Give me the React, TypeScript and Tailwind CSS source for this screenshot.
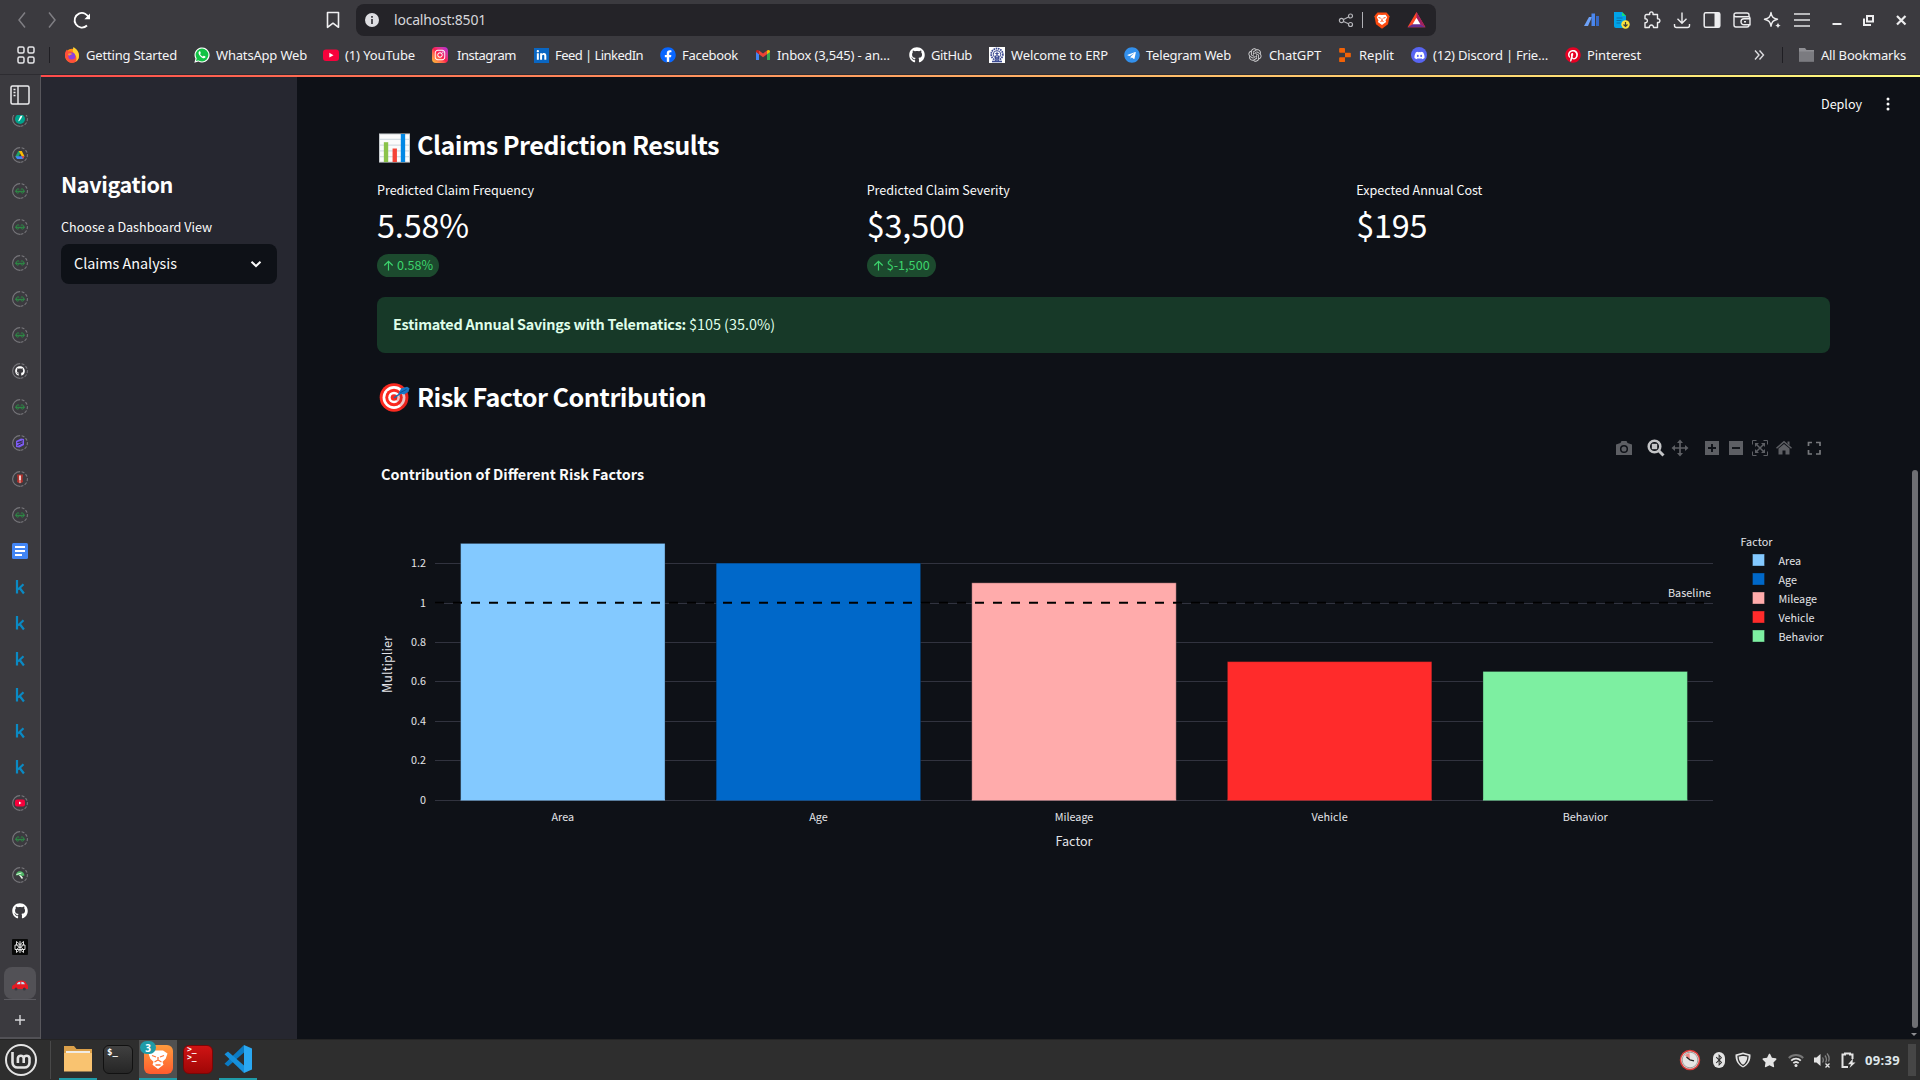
import { useLayoutEffect, useRef, useState, type ReactNode } from "react";
import { SiReplit } from "react-icons/si";
import {
  FaGithub,
  FaFacebook,
  FaTelegram,
  FaDiscord,
  FaPinterest,
  FaLinkedinIn,
  FaInstagram,
  FaStar,
  FaBluetoothB,
} from "react-icons/fa";
import { RiOpenaiFill } from "react-icons/ri";

const SANS = "font-['Noto_Sans_CJK_SC',sans-serif]";

/* Text set to an exact advance width by spreading the difference over its letters. */
function Fit({ w, className = "", children }: { w: number; className?: string; children: string }) {
  const ref = useRef<HTMLSpanElement>(null);
  const [spacing, setSpacing] = useState(0);
  useLayoutEffect(() => {
    const el = ref.current;
    if (el) setSpacing((w - el.getBoundingClientRect().width) / children.length);
  }, [w, children]);
  return (
    <span ref={ref} className={"inline-block whitespace-nowrap " + className} style={{ letterSpacing: spacing }}>
      {children}
    </span>
  );
}

function Svg({ s = 20, box = 20, className = "", children }: { s?: number; box?: number; className?: string; children: ReactNode }) {
  return (
    <svg width={s} height={s} viewBox={`0 0 ${box} ${box}`} fill="none" className={"shrink-0 " + className}>
      {children}
    </svg>
  );
}

/* ---------- Browser icons ---------- */

const FirefoxIcon = () => (
  <Svg s={16} box={16}>
    <circle cx="8" cy="8.700" r="7" fill="#ff8a16" />
    <path d="M1 8C.8 5.500 2 3.500 3 2.500c.3 1 .8 1.500 1.500 2C6 4 7 4.200 8 5L15 9c0 4-3.200 6.800-7 6.800S1 12.500 1 8z" fill="#ff4f3a" />
    <path d="M9.500 0c2.500 1.500 5.500 4.500 5.500 8.700 0 3-1.700 5-3.500 6 1.500-2.200 1.200-5-.3-6.700C9.500 6 8 4 9.500 0z" fill="#ffcf2e" />
    <circle cx="7.800" cy="9" r="3.500" fill="#8a3fe0" />
    <path d="M4 6.800c1.500-1 3.500-.5 4.500.5-1.500 0-2 .7-2.800 1.200C4.800 8.800 4 8 4 6.800z" fill="#ffa02e" />
  </Svg>
);
const WhatsAppIcon = () => (
  <Svg s={16} box={24}>
    <path d="M.5 23.500L2.200 17.500A11.300 11.300 0 1 1 6.600 21.900z" fill="#fff" />
    <circle cx="12" cy="12" r="9.600" fill="#12c245" />
    <path d="M3 21l1.200-4.500 3.300 3.300z" fill="#12c245" />
    <path d="M8 6.500c-2.600 2-.4 5.600 1.800 7.700 2.300 2.200 5.200 4 7.100 1.600.7-1 .3-1.600-.4-2l-1.700-.8c-.9-.4-1.200 1.500-2 1.200-1.500-.6-2.900-2-3.500-3.300-.3-.8 1.100-1.200.9-2l-.8-2c-.3-.6-.8-.8-1.400-.4z" fill="#fff" />
  </Svg>
);
const YouTubeIcon = () => (
  <Svg s={16} box={16}>
    <rect x="0" y="2.500" width="16" height="11.500" rx="3" fill="#f7023c" />
    <path d="M6.300 5.800v4.800l4.200-2.400z" fill="#fff" />
  </Svg>
);
const InstagramIcon = () => (
  <span className="flex size-4 shrink-0 items-center justify-center rounded bg-linear-to-tr from-[#ffc12e] via-[#fb1b4f] to-[#b51fe0]">
    <FaInstagram className="size-3 text-white" />
  </span>
);
const LinkedInIcon = () => (
  <span className="flex size-[15px] shrink-0 items-center justify-center bg-[#0a66c2]">
    <FaLinkedinIn className="size-[11px] text-white" />
  </span>
);
const OnWhite = ({ children }: { children: ReactNode }) => (
  <span className="flex size-4 shrink-0 items-center justify-center">
    <span className="flex size-[14px] items-center justify-center rounded-full bg-white">{children}</span>
  </span>
);
const GmailIcon = () => (
  <Svg s={16} box={16}>
    <path d="M1 13V4.500l3 2.300V13z" fill="#4285f4" />
    <path d="M12 13V6.800l3-2.300V13z" fill="#34a853" />
    <path d="M4 3.500l4 3 4-3v3.700l-4 3-4-3z" fill="#ea4335" />
    <path d="M1 4.500C1 2.800 2.700 2.500 4 3.500v3.700L1 5z" fill="#c5221f" />
    <path d="M15 4.500c0-1.700-1.700-2-3-1v3.700L15 5z" fill="#fbbc04" />
  </Svg>
);
const ErpIcon = () => (
  <Svg s={16} box={16}>
    <path d="M0 0h16v16H0z" fill="#fff" />
    <circle cx="8" cy="7.300" r="5.800" stroke="#3b4a92" strokeWidth="1.800" strokeDasharray="1.600 .7" />
    <circle cx="8" cy="7.300" r="3.700" stroke="#3b4a92" strokeWidth="1" />
    <path d="M8 4.500v8M6.300 6.500h3.400M6.500 9l1.500-1.500L9.500 9v3h-3z" stroke="#3b4a92" />
    <path d="M3 14.500h10" stroke="#3b4a92" strokeWidth="1.600" />
  </Svg>
);

/* label, cell width, label width, icon */
const BOOKMARKS: [string, number, number, ReactNode][] = [
  ["Getting Started", 130, 91, <FirefoxIcon />],
  ["WhatsApp Web", 129, 91, <WhatsAppIcon />],
  ["(1) YouTube", 109, 70, <YouTubeIcon />],
  ["Instagram", 101, 59, <InstagramIcon />],
  ["Feed | LinkedIn", 127, 88, <LinkedInIcon />],
  ["Facebook", 95, 56, <OnWhite><FaFacebook className="size-4 shrink-0 text-[#0866ff]" /></OnWhite>],
  ["Inbox (3,545) - an…", 154, 113, <GmailIcon />],
  ["GitHub", 80, 41, <FaGithub className="size-4 shrink-0 text-white" />],
  ["Welcome to ERP", 135, 97, <ErpIcon />],
  ["Telegram Web", 123, 85, <OnWhite><FaTelegram className="size-4 shrink-0 text-[#3390ec]" /></OnWhite>],
  ["ChatGPT", 90, 52, <RiOpenaiFill className="size-4 shrink-0 text-[#d4d4d6]" />],
  ["Replit", 74, 35, <SiReplit className="size-[14px] shrink-0 text-[#f26207]" />],
  [
    "(12) Discord | Frie…",
    154,
    115,
    <span className="flex size-4 shrink-0 items-center justify-center rounded-full bg-[#5865f2]">
      <FaDiscord className="size-[11px] text-white" />
    </span>,
  ],
  ["Pinterest", 90, 54, <OnWhite><FaPinterest className="size-4 shrink-0 text-[#e60023]" /></OnWhite>],
];

const EXTENSION_ICONS: ReactNode[] = [
  <Svg>
    <path d="M2 16L7 7h3L6 16z" fill="#6ea2f8" />
    <path d="M9.500 3.500H13V16H9.500z" fill="#4a86ee" />
    <path d="M14 6h3v10h-3z" fill="#3568c6" />
  </Svg>,
  <Svg>
    <path d="M2 2h8l4 4v12H4a2 2 0 0 1-2-2z" fill="#00a3e8" />
    <path d="M10 2l4 4h-4z" fill="#16e07a" />
    <path d="M4.500 8h6M4.500 10.500h5M4.500 13h4" stroke="#0870a8" />
    <circle cx="13.500" cy="14.500" r="4.200" fill="#fbe13c" />
    <path d="M13.500 12v4.500m-2-2l2 2 2-2" stroke="#3f4038" strokeWidth="1.200" />
  </Svg>,
  <Svg className="text-[#ededef]">
    <path d="M4.500 4.500h3.200C7 1 11.800 1 11 4.500h4.500v4.300c3.200-.7 3.200 4.400 0 3.700v5H11.500c.3-3.300-4.500-3.300-4.200 0H3v-4.700c3.200.3 3.200-4.300 0-4V6a1.500 1.500 0 0 1 1.500-1.500z" stroke="currentColor" strokeWidth="1.400" strokeLinejoin="round" />
  </Svg>,
  <Svg>
    <path d="M10 2.500V13M5.500 8.800l4.500 4.400 4.500-4.400M2.500 14v1.500c0 1.500.7 2 2 2h11c1.300 0 2-.5 2-2V14" stroke="#ededef" strokeWidth="1.400" />
  </Svg>,
  <Svg>
    <rect x="2.200" y="2.700" width="15.600" height="14.600" rx="1.500" stroke="#ededef" strokeWidth="1.500" />
    <path d="M12.500 3h5v14h-5z" fill="#ededef" />
  </Svg>,
  <Svg>
    <path d="M17 6.500V5c0-1.300-.7-2-2-2H4C2.700 3 2 3.700 2 5v10c0 1.300.7 2 2 2h11c1.300 0 2-.7 2-2M2 5c0 1 .7 1.700 2 1.700h12.500c1 0 1.500.5 1.500 1.500v6.600h-6a3 3 0 0 1 0-6h6M12 11.800h2" stroke="#ededef" strokeWidth="1.400" />
  </Svg>,
  <Svg>
    <path d="M9 2.500c.8 4.500 2 5.700 6.500 6.800-4.500 1.100-5.700 2.400-6.500 6.900-.8-4.500-2-5.800-6.500-6.900C7 8.200 8.200 7 9 2.500z" stroke="#ededef" strokeWidth="1.400" strokeLinejoin="round" />
    <path d="M16 12.500c.4 2 .9 2.600 2.800 3-1.900.5-2.400 1.100-2.800 3-.4-1.900-1-2.500-2.800-3 1.800-.4 2.400-1 2.800-3z" fill="#ededef" />
  </Svg>,
  <Svg>
    <path d="M2 4h16M2 10h16M2 16h16" stroke="#b8b8bb" strokeWidth="1.800" />
  </Svg>,
];

function BrowserChrome() {
  return (
    <header className="flex h-[75px] w-full flex-col border-b border-[#2d2c31] bg-[#3b3a3f] font-['Noto_Sans',sans-serif] text-[#f4f4f6]">
      <div className="flex h-10 items-center">
        <div className="flex w-[356px] items-center pl-3">
          <Svg className="mr-2.5 text-[#7f7e83]">
            <path d="M13 2.500L7 10l6 7.500" stroke="currentColor" strokeWidth="1.500" />
          </Svg>
          <Svg className="mr-2.5 text-[#7f7e83]">
            <path d="M7 2.500L13 10l-6 7.500" stroke="currentColor" strokeWidth="1.500" />
          </Svg>
          <Svg>
            <path d="M17 8.500A7.300 7.300 0 1 0 15 15.500" stroke="#fff" strokeWidth="1.800" />
            <path d="M18 3.500v5.800h-5.600z" fill="#fff" />
          </Svg>
          <Svg className="ml-[231px]">
            <path d="M4.500 2.500h11v14.800L10 13.200l-5.500 4.100z" stroke="#f0f0f2" strokeWidth="1.600" strokeLinejoin="round" />
          </Svg>
        </div>
        <div className="flex h-8 w-[1080px] items-center rounded-lg bg-[#242328]">
          <Svg s={14} box={14} className="mr-[15px] ml-[9px]">
            <circle cx="7" cy="7" r="7" fill="#dedee2" />
            <path d="M6.200 6h1.600v5H6.200zM6.200 3h1.600v1.700H6.200z" fill="#2b2a30" />
          </Svg>
          <Fit w={92} className="text-sm text-[#d6d6db]">localhost:8501</Fit>
          <div className="ml-auto flex items-center pr-[10px]">
            <Svg s={16} box={16} className="mr-2 text-[#b5b5ba]">
              <circle cx="3.500" cy="8.500" r="2.100" stroke="currentColor" strokeWidth="1.200" />
              <circle cx="12.500" cy="4" r="2" stroke="currentColor" strokeWidth="1.200" />
              <circle cx="12.500" cy="12.500" r="2" stroke="currentColor" strokeWidth="1.200" />
              <path d="M5.500 7.500l5-2.500M5.500 9.500l5 2.200" stroke="currentColor" strokeWidth="1.200" />
            </Svg>
            <div className="mr-2.5 h-4 w-px bg-[#b0b0b5]" />
            <Svg s={18} box={18} className="mr-4">
              <path d="M4.500 1.500h9l2 2.200 1 1.500-1.500 8L9 17.700l-6-4.500-1.500-8 1-1.500z" fill="#fb4a10" />
              <path d="M9 4l3.500-.3 1.700 2.500-1.700 3.300.7 1.500L9 14l-4.200-3 .7-1.500-1.700-3.300 1.700-2.500z" fill="#fff" />
              <path d="M5.500 6.500l2.200.7M12.500 6.500l-2.200.7M7.500 10.500L9 9.800l1.500.7M9 7.500v2.300" stroke="#fb4a10" />
            </Svg>
            <Svg s={19} box={18}>
              <path d="M9 1L17.500 15.500H.5z" fill="#ff4724" />
              <path d="M9 1L17.500 15.500 9 10.500z" fill="#9e1f63" />
              <path d="M.5 15.500L9 10.500l8.500 5z" fill="#662d91" />
              <path d="M9 6.300l3.700 6.200H5.300z" fill="#fff" />
            </Svg>
          </div>
        </div>
        <div className="ml-[141px] flex">
          {EXTENSION_ICONS.map((icon, i) => (
            <div key={i} className="flex w-[30px] justify-center">{icon}</div>
          ))}
        </div>
        <div className="ml-1 flex text-[#ededef]">
          <Svg s={32} box={32}><path d="M11.500 20h9" stroke="currentColor" strokeWidth="2" /></Svg>
          <Svg s={32} box={32}>
            <path d="M14 12h6v5.500h-6zM11 14.500V21h7" stroke="currentColor" strokeWidth="2" />
          </Svg>
          <Svg s={32} box={32}><path d="M12 12l8.500 8.500M20.500 12L12 20.500" stroke="currentColor" strokeWidth="2.200" /></Svg>
        </div>
      </div>
      <div className="flex h-[30px] items-center text-[13px]">
        <Svg s={18} box={18} className="mr-3.5 ml-[17px]">
          {[[1, 1], [11, 1], [1, 11], [11, 11]].map(([x, y]) => (
            <rect key={`${x}-${y}`} x={x} y={y} width="6" height="6" rx="1.500" stroke="#e6e6e9" strokeWidth="1.500" />
          ))}
        </Svg>
        <div className="mr-[14px] h-4 w-px bg-[#1f1e23]" />
        {BOOKMARKS.map(([label, cell, width, icon]) => (
          <div key={label} className="flex h-5 shrink-0 items-center" style={{ width: cell }}>
            <span className={"flex w-4 shrink-0 justify-center " + (label === "Instagram" ? "mr-[9px]" : "mr-1.5")}>{icon}</span>
            <Fit w={width} className="pt-px">{label}</Fit>
          </div>
        ))}
        <Svg s={12} box={12} className="ml-auto">
          <path d="M2 1.500L6 6l-4 4.500M6.500 1.500l4 4.500-4 4.500" stroke="#dcdce0" strokeWidth="1.400" />
        </Svg>
        <div className="mr-[15px] ml-[17px] h-4 w-px bg-[#1f1e23]" />
        <Svg s={17} box={17} className="mr-1.5">
          <path d="M1 1h6l1.500 2H16v11.500H1z" fill="#8f8f94" />
          <path d="M1 4.500h15v10H1z" fill="#7b7b80" />
        </Svg>
        <Fit w={85} className="mr-3.5 pt-px">All Bookmarks</Fit>
      </div>
    </header>
  );
}

/* ---------- Vertical tab strip ---------- */

function Sleeping({ children }: { children: ReactNode }) {
  return (
    <span className="relative flex size-4 items-center justify-center">
      <svg width="16" height="16" viewBox="0 0 16 16" fill="none" className="absolute inset-0">
        <circle cx="8" cy="8" r="7.400" stroke="#77767b" strokeWidth="1.100" strokeDasharray="23.250 1.500 3 1.500 3 1.500 3 1.500 3 1.500 3 1.500" transform="rotate(90 8 8)" />
      </svg>
      {children}
    </span>
  );
}
const Gfg = () => (
  <Sleeping>
    <Svg s={10} box={10}>
      <path d="M.3 5.300h9.400M4.200 3.300C3 2.500 1 3 1 5.200c0 2.300 2.800 2.600 3.400.2M5.800 3.300C7 2.500 9 3 9 5.200c0 2.300-2.800 2.600-3.400.2" stroke="#2a9446" strokeWidth=".95" />
    </Svg>
  </Sleeping>
);
const KaggleIcon = () => (
  <Svg s={16} box={16}>
    <path d="M5 1v13.500M11.500 5.300L6 10.500M7.700 9l4.200 5.500" stroke="#0a8ac4" strokeWidth="2.200" />
  </Svg>
);

const Car = () => (
  <Svg s={16} box={16} className="mt-0.5">
    <path d="M0 11.500c0-1.800.8-2.800 3-3.300C4.800 5.300 6 4.500 9 4.500c3.200 0 4.700 1 5.500 3.300 1.200.6 1.500 1.700 1.500 3.200v2H0z" fill="#e51b23" />
    <path d="M4.800 8.200C5.800 6.400 6.700 5.700 8.300 5.700v2.500zM9.300 5.700c2 0 3 .8 3.600 2.500H9.300z" fill="#bfe3f7" />
    <circle cx="4" cy="13" r="1.500" fill="#3a3a40" />
    <circle cx="12.300" cy="13" r="1.500" fill="#3a3a40" />
  </Svg>
);

const TABS: ReactNode[] = [
  <Sleeping>
    <Svg s={10} box={10}><circle cx="5" cy="5" r="5" fill="#00a28c" /><path d="M7.500 1.500l-2 .5L3 7.500l1.800-1L6.500 4z" fill="#fff" /></Svg>
  </Sleeping>,
  <Sleeping>
    <Svg s={10} box={10}>
      <path d="M3.300 1h3.200L3 7.500 1 8 .5 6.200z" fill="#1fa463" />
      <path d="M3.800 1h3l2.700 5.200-2.700.3z" fill="#fbbc04" />
      <path d="M.5 6.300h9L8 9H2z" fill="#4285f4" />
      <path d="M6.700 6.300h2.800L8 9z" fill="#ea4335" />
    </Svg>
  </Sleeping>,
  <Gfg />, <Gfg />, <Gfg />, <Gfg />, <Gfg />,
  <Sleeping><FaGithub className="size-2.5 text-white" /></Sleeping>,
  <Gfg />,
  <Sleeping>
    <Svg s={10} box={10}><path d="M1 3l5-2.500L9 1v6L4.500 9.500 1 9z" fill="#7d5cf5" /><path d="M8 2.800L2.500 4.500 7.500 5 2.500 7.500" stroke="#34304a" /></Svg>
  </Sleeping>,
  <Sleeping>
    <Svg s={10} box={10}><path d="M2 .5h6L7.500 5 8 8 5 9.500 2 8l.5-3z" fill="#b5322c" /><path d="M5 1.500v5M5 7.500v1" stroke="#fff" strokeWidth="1.500" /></Svg>
  </Sleeping>,
  <Gfg />,
  <Svg s={16} box={16}><rect width="16" height="16" rx="1.500" fill="#4285f4" /><path d="M3 4h10M3 8h10M3 12h7" stroke="#fff" strokeWidth="1.900" /></Svg>,
  <KaggleIcon />, <KaggleIcon />, <KaggleIcon />, <KaggleIcon />, <KaggleIcon />, <KaggleIcon />,
  <Sleeping>
    <Svg s={10} box={10}><rect y="1.500" width="10" height="7" rx="2" fill="#f7023c" /><path d="M4 3.500v3l2.500-1.500z" fill="#fff" /></Svg>
  </Sleeping>,
  <Gfg />,
  <Sleeping>
    <Svg s={10} box={10}><path d="M4.500 4.500l3 4" stroke="#e9f5ea" strokeWidth="1.500" /><path d="M.8 5.500C1 2.500 3 .8 5.500 1.300 8 1.800 9.300 3.200 9.500 5.500L7 6 5 5z" fill="#4fb866" /><path d="M1.500 4.500L6.500 3" stroke="#e9f5ea" /></Svg>
  </Sleeping>,
  <FaGithub className="size-4 text-white" />,
  <Svg s={16} box={16}>
    <rect width="16" height="16" rx="1" fill="#090909" />
    <path d="M8 2v12M3 6h10v4.500H3zM4.500 2.500V6L8 9l3.500-3V2.500L8 5.500zM4.500 13.500v-3L8 7.500l3.500 3v3L8 10.500z" stroke="#f0f0f0" strokeWidth=".9" />
  </Svg>,
];

function TabStrip() {
  return (
    <aside className="flex w-[41px] shrink-0 flex-col items-center overflow-hidden border-r border-[#57565b] bg-[#3b3a3f]">
      <div className="flex h-10 shrink-0 items-center">
        <Svg s={20} box={20}>
          <rect x="1" y="1" width="18" height="18" rx="1.500" stroke="#ededef" strokeWidth="1.500" />
          <path d="M8 1v18M3.500 4.500h2M3.500 7.500h2M3.500 10.500h2" stroke="#ededef" strokeWidth="1.400" />
        </Svg>
      </div>
      <div className="flex h-[850px] shrink-0 flex-col items-center justify-end overflow-hidden">
        {TABS.map((tab, i) => (
          <div key={i} className="flex h-9 w-10 shrink-0 items-center justify-center">{tab}</div>
        ))}
      </div>
      <div className="mt-0.5 flex h-8 w-8 shrink-0 items-center justify-center rounded-lg bg-[#525156]">
        <Car />
      </div>
      <div className="h-px w-8 shrink-0 bg-[#5b5a60]" />
      <div className="flex h-[37px] shrink-0 items-center pt-0.5">
        <Svg s={12} box={12}><path d="M6 1v10M1 6h10" stroke="#d8d8db" strokeWidth="1.400" /></Svg>
      </div>
      <div className="h-0.5 w-10 shrink-0 bg-[#525156]" />
    </aside>
  );
}

/* ---------- Streamlit app ---------- */

function Sidebar() {
  return (
    <nav className={"flex w-64 shrink-0 flex-col bg-[#262730] px-5 pt-[91px] text-[#fafafa] " + SANS}>
      <h2 className="flex h-9">
        <Fit w={112} className="text-[21.6px] leading-9 font-bold text-white">Navigation</Fit>
      </h2>
      <div className="mt-[15px] flex h-5">
        <Fit w={151} className="text-[12.6px] leading-5">Choose a Dashboard View</Fit>
      </div>
      <div className="mt-[7px] flex h-10 w-[216px] items-center justify-between rounded-lg bg-[#0e1117] px-[13px]">
        <Fit w={103} className="pb-0.5 text-[14.4px] leading-6">Claims Analysis</Fit>
        <Svg s={16} box={16}><path d="M3.500 5.700L8 10l4.500-4.300" stroke="#fafafa" strokeWidth="2" /></Svg>
      </div>
    </nav>
  );
}

function Metric({ label, lw, value, vw, delta, dw }: { label: string; lw: number; value: string; vw: number; delta?: string; dw?: number }) {
  return (
    <div className="flex flex-1 flex-col items-start">
      <Fit w={lw} className="text-[12.6px] leading-5">{label}</Fit>
      <Fit w={vw} className="mt-[3px] text-[32.4px] leading-[42px] text-white">{value}</Fit>
      {delta && (
        <div className="mt-[9px] flex h-[23px] items-center rounded-full bg-[#1c4a2e] px-1.5 text-[#3dd56d]">
          <Svg s={11} box={11} className="mr-[3px]">
            <path d="M5.500 10.500v-9M1.300 5.500l4.200-4.200 4.200 4.200" stroke="currentColor" strokeWidth="1.200" />
          </Svg>
          <Fit w={dw ?? 36} className="pb-px text-[12.6px] leading-5">{delta}</Fit>
        </div>
      )}
    </div>
  );
}

const ChartEmoji = () => (
  <Svg s={31} box={32}>
    <rect x="0.500" y="1" width="31" height="29" fill="#fbfbfb" stroke="#c9ced1" />
    <path d="M1 6.500h30M1 12.500h30M1 18.500h30M1 24.500h30" stroke="#c9d6dc" />
    <path d="M5 9.500h4.500V30H5z" fill="#8bc34a" />
    <path d="M14 16h4.500v14H14z" fill="#f44336" />
    <path d="M22.500 1H27v29h-4.500z" fill="#0288e5" />
  </Svg>
);
const TargetEmoji = () => (
  <Svg s={31} box={32}>
    <circle cx="15.500" cy="17" r="14.800" fill="#fb2a20" />
    <circle cx="15.500" cy="17" r="11.800" fill="#fff" />
    <circle cx="15.500" cy="17" r="9" fill="#fb2a20" />
    <circle cx="15.500" cy="17" r="6" fill="#fff" />
    <circle cx="15.500" cy="17" r="3.400" fill="#fb2a20" />
    <path d="M15.500 17l9 12.500a15 15 0 0 0 5-17z" fill="#b31412" opacity=".25" />
    <path d="M15.500 17.500L25 11" stroke="#1d6fae" strokeWidth="1.600" />
    <path d="M20 13l3-5.500 6-1.500 2.500 1.500-1 3.500-4.500 3z" fill="#1976c5" />
    <path d="M22 12l6.500-3.500" stroke="#0d4f90" />
  </Svg>
);

const TOOLS: [number, ReactNode][] = [
  [32, <Svg s={18} box={18}><path d="M1 5.500L5.500 4l1-2h5l1 2L17 5.500V16H1z" fill="#5d5f64" /><circle cx="9" cy="10" r="3.300" stroke="#0e1117" strokeWidth="1.500" /></Svg>],
  [24, <Svg s={18} box={18}><circle cx="7.500" cy="7.500" r="5.800" stroke="#c3c4c6" strokeWidth="2.500" /><path d="M4.800 4.800h5.400v5.400H4.800z" fill="#c3c4c6" /><path d="M11.800 11.800l4.700 4.700" stroke="#c3c4c6" strokeWidth="3" /></Svg>],
  [32, <Svg s={18} box={18}><path d="M9 2.500v13M2.500 9h13" stroke="#5d5f64" strokeWidth="1.700" /><path d="M9 .5L12 4H6zM9 17.500L12 14H6zM.5 9L4 6v6zM17.500 9L14 6v6z" fill="#5d5f64" /></Svg>],
  [24, <Svg s={18} box={18}><path d="M2 2h14v14H2z" fill="#5d5f64" /><path d="M9 5v8M5 9h8" stroke="#0e1117" strokeWidth="1.900" /></Svg>],
  [24, <Svg s={18} box={18}><path d="M2 2h14v14H2z" fill="#5d5f64" /><path d="M5 9h8" stroke="#0e1117" strokeWidth="1.900" /></Svg>],
  [24, <Svg s={18} box={18}><path d="M1.500 5.500v-4h4M12.500 1.500h4v4M16.500 12.500v4h-4M5.500 16.500h-4v-4" stroke="#5d5f64" /><path d="M5.500 5.500l7 7M12.500 5.500l-7 7" stroke="#5d5f64" strokeWidth="1.500" /><path d="M4 4h4L4 8zM14 4v4l-4-4zM14 14h-4l4-4zM4 14v-4l4 4z" fill="#5d5f64" /></Svg>],
  [30, <Svg s={18} box={18}><path d="M1.500 9.300L9 2.800l7.500 6.500" stroke="#5d5f64" strokeWidth="1.500" /><path d="M12.500 2.500h2v4l-2-2zM3.500 9.500L9 5l5.500 4.500v6h-4v-4h-3v4h-4z" fill="#5d5f64" /></Svg>],
  [18, <Svg s={18} box={18}><path d="M3.500 7V3.500H7M11 3.500h4V7M15 11v4h-4M7 15H3.500v-4" stroke="#77797d" strokeWidth="1.700" /></Svg>],
];

const FACTORS = [
  { name: "Area", value: 1.3, color: "#83c9ff" },
  { name: "Age", value: 1.2, color: "#0068c9" },
  { name: "Mileage", value: 1.1, color: "#ffabab" },
  { name: "Vehicle", value: 0.7, color: "#ff2b2b" },
  { name: "Behavior", value: 0.65, color: "#7defa1" },
];

/* Plot frame: left edge, width, y of the zero line, and pixels per multiplier unit. */
const PX = 58;
const PW = 1278;
const P0 = 339.5;
const UNIT = 197;

function RiskChart() {
  const slot = PW / FACTORS.length;
  return (
    <svg width="1453" height="450" viewBox="0 0 1453 450" className={SANS} fill="#e3e4e8">
      <text x="4" y="20" fontSize="14.400" fontWeight="700" fill="#fafafa" textLength="263">Contribution of Different Risk Factors</text>
      {[0, 0.2, 0.4, 0.6, 0.8, 1, 1.2].map((t) => {
        const y = Math.round(P0 - t * UNIT) + 0.5;
        return (
          <g key={t}>
            <path d={`M${PX} ${y}h${PW}`} stroke="#31333f" />
            <text x="49" y={y + 3.5} fontSize="10.800" textAnchor="end">{t}</text>
          </g>
        );
      })}
      {FACTORS.map((f, i) => {
        const h = f.value * UNIT;
        const x = PX + slot * (i + 0.1);
        return (
          <g key={f.name}>
            <rect x={x} y={P0 - h} width={slot * 0.8} height={h + 1} fill={f.color} />
            <path d={`M${x} ${P0}v${-h}h${slot * 0.8}v${h}`} fill="none" stroke="#0e1117" strokeOpacity=".35" />
            <text x={x + slot * 0.4} y="361" fontSize="10.800" textAnchor="middle">{f.name}</text>
          </g>
        );
      })}
      <path d={`M${PX} 142.800h${PW}`} stroke="#000" strokeWidth="2" strokeDasharray="9 9" />
      <text x="1334" y="137" fontSize="10.800" textAnchor="end" textLength="43">Baseline</text>
      <text x="697" y="386" fontSize="12.600" textAnchor="middle" textLength="37">Factor</text>
      <text transform="translate(14.500 204.500) rotate(-90)" fontSize="12.600" textAnchor="middle" textLength="57">Multiplier</text>
      <text x="1363.500" y="86" fontSize="10.800" textLength="32">Factor</text>
      {FACTORS.map((f, i) => (
        <g key={f.name}>
          <rect x="1375.500" y={94 + i * 19} width="12" height="12" fill={f.color} stroke="#0e1117" strokeOpacity=".35" />
          <text x="1401.500" y={105 + i * 19} fontSize="10.800">{f.name}</text>
        </g>
      ))}
    </svg>
  );
}

function Dashboard() {
  return (
    <main className={"flex flex-1 flex-col pl-20 text-[#fafafa] " + SANS}>
      <div className="flex h-[57px] items-center justify-end">
        <Fit w={41} className="text-[12.6px] leading-5">Deploy</Fit>
        <Svg s={16} box={16} className="mr-6 ml-[18px]">
          <circle cx="8" cy="3" r="1.500" fill="#fafafa" />
          <circle cx="8" cy="8" r="1.500" fill="#fafafa" />
          <circle cx="8" cy="13" r="1.500" fill="#fafafa" />
        </Svg>
      </div>
      <div className="-mt-[6px] flex w-[1453px] flex-col">
        <h2 className="flex h-9 items-start pl-0.5">
          <span className="mt-[7px]"><ChartEmoji /></span>
          <Fit w={302} className="ml-[7px] text-[25.2px] leading-9 font-bold text-white">Claims Prediction Results</Fit>
        </h2>
        <div className="mt-[18px] flex h-[117px] gap-4">
          <Metric label="Predicted Claim Frequency" lw={157} value="5.58%" vw={92} delta="0.58%" dw={36} />
          <Metric label="Predicted Claim Severity" lw={143} value="$3,500" vw={98} delta="$-1,500" dw={43} />
          <Metric label="Expected Annual Cost" lw={126} value="$195" vw={71} />
        </div>
        <div className="flex h-14 items-center rounded-lg bg-[#173928] px-4 pb-0.5 text-[14.4px] leading-6 text-[#dffde9]">
          <Fit w={293} className="mr-[3px] font-bold">Estimated Annual Savings with Telematics:</Fit>
          <Fit w={86}>$105 (35.0%)</Fit>
        </div>
        <h2 className="mt-[25px] flex h-10 items-start pl-0.5">
          <span className="mt-[3px]"><TargetEmoji /></span>
          <Fit w={289} className="ml-[7px] text-[25.2px] leading-9 font-bold text-white">Risk Factor Contribution</Fit>
        </h2>
        <div className="mt-[21px] flex h-[18px] items-center justify-end pr-[7px]">
          {TOOLS.map(([w, icon], i) => (
            <span key={i} className="flex shrink-0" style={{ width: w }}>{icon}</span>
          ))}
        </div>
        <div className="mt-[3px]">
          <RiskChart />
        </div>
      </div>
    </main>
  );
}

/* ---------- Desktop taskbar ---------- */

function Launcher({ running, active, children }: { running?: boolean; active?: boolean; children: ReactNode }) {
  return (
    <div className={"relative flex h-full w-[38px] flex-col items-center justify-center border-b-2 " + (running ? "border-[#1f9ba8] " : "border-transparent ") + (active ? "bg-[#505050]" : "")}>
      {children}
    </div>
  );
}

function Taskbar() {
  return (
    <footer className="flex h-[41px] w-full items-center border-t border-[#242424] bg-[#2e2e2e]">
      <div className="ml-[5px] flex size-8 items-center justify-center rounded-full border-2 border-[#e4e4e4]">
        <Svg s={24} box={24}>
          <path d="M3.500 4v10.500a5 5 0 0 0 5 5h7a5 5 0 0 0 5-5V10a3 3 0 0 0-5.800 0v5M14.700 10a3 3 0 0 0-5.800 0v5" stroke="#e4e4e4" strokeWidth="2.600" />
        </Svg>
      </div>
      <div className="mr-2 ml-[13px] h-[38px] w-px bg-[#484848]" />
      <div className="flex h-full gap-0.5">
        <Launcher running>
          <Svg s={30} box={30}>
            <path d="M1 2h10l2.500 3H29v7H1z" fill="#dba04a" />
            <path d="M3 7h24v4H3z" fill="#f0ece4" />
            <path d="M1 9h28v18.500H1z" fill="#f9c370" />
          </Svg>
        </Launcher>
        <Launcher>
          <div className="h-[29px] w-[30px] rounded-md border border-[#111] bg-linear-to-b from-[#404040] to-[#262626] pl-[3px] font-['DejaVu_Sans_Mono',monospace] text-[9px] leading-[12px] font-bold text-white">$_</div>
        </Launcher>
        <Launcher running active>
          <div className="flex size-[29px] items-center justify-center rounded-md bg-linear-to-b from-[#ff9a3d] to-[#ff5a2e]">
            <Svg s={24} box={24}>
              <path d="M7 3.500h10l4.500 3-1.800 5.300-3.200 3 1 3L12 22l-5.500-4.200 1-3-3.200-3L2.500 6.500z" fill="#fff" />
              <path d="M6 8.500l4 1.500M18 8.500L14 10M8.500 15l3.500-2 3.500 2M12 10v3M9.500 18h5" stroke="#ff7438" strokeWidth="1.300" />
            </Svg>
          </div>
          <span className="absolute top-px left-px flex h-[13px] w-4 items-center justify-center rounded-full bg-[#1f9ba8] font-['Open_Sans',sans-serif] text-[10px] leading-none font-bold text-white">3</span>
        </Launcher>
        <Launcher>
          <div className="h-[29px] w-[30px] rounded-md border border-[#7a0606] bg-linear-to-b from-[#cf1414] to-[#a00606] pl-[3px] font-['DejaVu_Sans_Mono',monospace] text-[8px] leading-[8px] font-bold text-white">
            <div>&gt;_</div>
            <div>&gt;_</div>
          </div>
        </Launcher>
        <Launcher running>
          <Svg s={30} box={30}>
            <path d="M21 1l8 3.500v21L21 29z" fill="#2aa8f2" />
            <path d="M21 1v7.500L5 22.500 1.500 19.800z" fill="#0b7bc4" />
            <path d="M21 29v-7.500L5 7.500 1.500 10.200z" fill="#1690dc" />
          </Svg>
        </Launcher>
      </div>
      <div className="ml-auto flex items-center text-[#e4e4e4]">
        <Svg s={22} box={22} className="mr-[12px]">
          <circle cx="11" cy="11" r="9.500" fill="#e6e6e4" stroke="#dd3a38" strokeWidth="1.500" />
          <circle cx="11" cy="11" r="7.800" stroke="#8b8b88" strokeWidth=".8" />
          <path d="M11 11L6 6.500A7 7 0 0 1 10.500 4z" fill="#f08a88" />
          <path d="M7.500 8L11 11l4 .8" stroke="#222" strokeWidth="1.300" />
        </Svg>
        <div className="mr-[9px] flex h-4 w-3 items-center justify-center rounded-full bg-[#e4e4e4]">
          <FaBluetoothB className="size-3 text-[#2e2e2e]" />
        </div>
        <Svg s={18} box={18} className="mr-[10px]">
          <path d="M9 1.500l7.500 2c.3 6-2 10.500-7.500 13C3.500 14 1.200 9.500 1.500 3.500z" fill="currentColor" />
          <path d="M9 4l5 1.200c0 4.200-1.500 7.300-5 9.300-3.500-2-5-5.100-5-9.300z" stroke="#2e2e2e" strokeWidth="1.300" />
        </Svg>
        <FaStar className="mr-[11px] size-[15px]" />
        <Svg s={16} box={16} className="mr-[10px]">
          <path d="M.8 6a10.300 10.300 0 0 1 14.400 0" stroke="#777" strokeWidth="2" />
          <path d="M3.200 8.700a6.800 6.800 0 0 1 9.600 0M5.300 11.200a4 4 0 0 1 5.400 0" stroke="currentColor" strokeWidth="1.800" />
          <circle cx="8" cy="13.500" r="1.500" fill="currentColor" />
        </Svg>
        <Svg s={16} box={16} className="mr-[10px]">
          <path d="M0 5.500h2.500L6.500 2v12l-4-3.500H0z" fill="currentColor" />
          <path d="M8.500 5.500c1 1.500 1 3.500 0 5M11 3.500c1.800 2.500 1.800 5 .5 7M13 1.500c2.300 2.500 2.500 5.500 1.500 8" stroke="#808080" strokeWidth="1.300" />
          <path d="M11.500 11.500l4 4M15.500 11.500l-4 4" stroke="currentColor" strokeWidth="1.300" />
        </Svg>
        <Svg s={16} box={16} className="mr-[9px]">
          <path d="M8 15H2.500V2.500H5v-1h5v1h2.500V7" stroke="currentColor" strokeWidth="2" />
          <path d="M13 6.500L8 12.200h3L9.500 16l6-5.500h-3z" fill="currentColor" />
        </Svg>
        <Fit w={35} className="font-['Noto_Sans',sans-serif] text-[13px] leading-5 font-bold text-[#dfe6ea]">09:39</Fit>
        <div className="mr-1 ml-[8px] h-8 w-2 bg-[#464646]" />
      </div>
    </footer>
  );
}

export default function App() {
  return (
    <div className="flex h-[1080px] w-[1920px] flex-col overflow-hidden bg-[#0e1117]">
      <BrowserChrome />
      <div className="flex h-[964px]">
        <TabStrip />
        <div className="relative flex h-full flex-1">
          <Sidebar />
          <Dashboard />
          <div className="absolute inset-x-0 top-0 h-0.5 bg-linear-to-r from-[#ff4b4b] to-[#fffd80]" />
          <div className="absolute top-[395px] right-0.5 h-[558px] w-1.5 rounded-full bg-[#6e6f73]" />
          <div className="absolute right-[3px] bottom-[3px] size-0 border-x-[3px] border-t-[3px] border-x-transparent border-t-[#8d8e92]" />
        </div>
      </div>
      <Taskbar />
    </div>
  );
}
